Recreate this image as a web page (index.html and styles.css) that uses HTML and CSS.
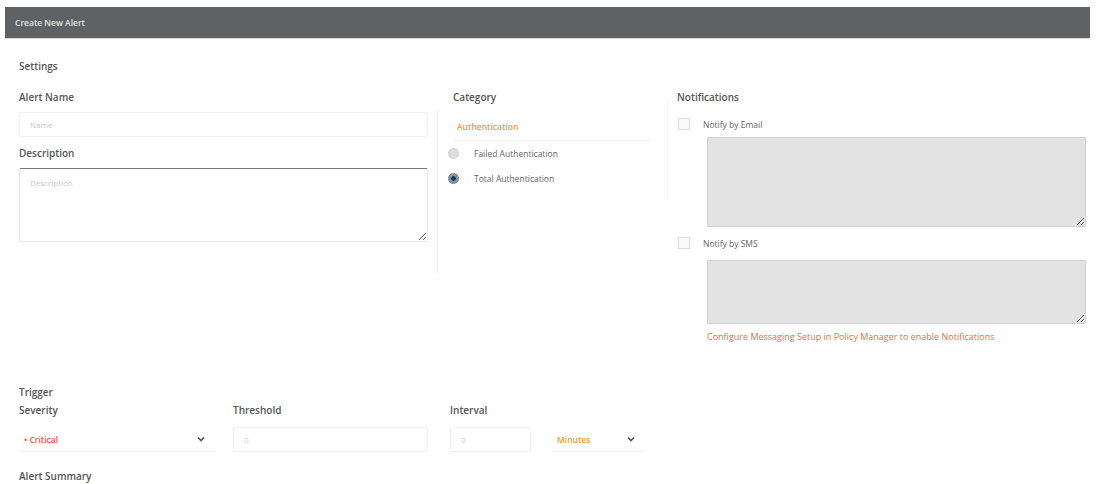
FILE: index.html
```html
<!DOCTYPE html>
<html lang="en">
<head>
  <meta charset="UTF-8" />
  <title>Create New Alert</title>
  <link rel="stylesheet" href="styles.css">
</head>
<body>
  <div class="page">
    <header class="panel-head">Create New Alert</header>

    <main class="panel-body">
      <h2 class="section">Settings</h2>

      <div class="settings">
        <div class="col col-main">
          <label class="label">Alert Name</label>
          <input class="field" type="text" placeholder="Name">
          <label class="label desc-label">Description</label>
          <textarea class="field area" placeholder="Description"></textarea>
        </div>

        <div class="col col-cat">
          <label class="label">Category</label>
          <div class="tab">Authentication</div>
          <div class="radio-row"><span class="radio"></span>Failed Authentication</div>
          <div class="radio-row"><span class="radio checked"></span>Total Authentication</div>
        </div>

        <div class="col col-notif">
          <label class="label">Notifications</label>
          <div class="check-row"><span class="check"></span>Notify by Email</div>
          <textarea class="gray-area email" disabled></textarea>
          <div class="check-row sms"><span class="check"></span>Notify by SMS</div>
          <textarea class="gray-area sms-area" disabled></textarea>
          <p class="note">Configure Messaging Setup in Policy Manager to enable Notifications</p>
        </div>
      </div>

      <h2 class="section trigger">Trigger</h2>

      <div class="trigger-row">
        <div class="tcol">
          <label class="label">Severity</label>
          <div class="select sev">
            <span class="sev-text">&bull; Critical</span>
            <svg width="8" height="6" viewBox="0 0 8 6"><path d="M1 1.5 L4 4.5 L7 1.5" fill="none" stroke="#555" stroke-width="1.6"/></svg>
          </div>
        </div>
        <div class="tcol">
          <label class="label">Threshold</label>
          <input class="field small" type="text" placeholder="0">
        </div>
        <div class="tcol">
          <label class="label">Interval</label>
          <input class="field small" type="text" placeholder="0">
        </div>
        <div class="tcol">
          <label class="label">&nbsp;</label>
          <div class="select mins">
            <span class="min-text">Minutes</span>
            <svg width="8" height="6" viewBox="0 0 8 6"><path d="M1 1.5 L4 4.5 L7 1.5" fill="none" stroke="#555" stroke-width="1.6"/></svg>
          </div>
        </div>
      </div>

      <h2 class="section summary">Alert Summary</h2>
    </main>
  </div>
</body>
</html>
```

FILE: styles.css
```css
body {
  margin: 0;
  background: #fff;
  font-family: "Open Sans", "Liberation Sans", sans-serif;
  color: #444;
}
.page {
  padding: 7px 6px 0 5px;
}
.panel-head {
  background: #5f6264;
  color: #e2e2e2;
  height: 31px;
  line-height: 31px;
  padding-left: 10px;
  font-size: 8.5px;
  font-weight: 600;
  border-bottom: 1px solid #d8d8d8;
}
.panel-body {
  padding: 0 4px 0 14px;
}
.section {
  margin: 0;
  font-size: 10px;
  font-weight: 600;
  line-height: 14px;
  color: #555;
}
.panel-body > .section:first-child {
  margin-top: 20px;
}
.label {
  display: block;
  font-size: 10px;
  font-weight: 600;
  line-height: 14px;
  color: #555;
}
.settings {
  display: grid;
  grid-template-columns: 418px 230px 1fr;
  margin-top: 17px;
}
.col-main {
  padding-right: 9px;
}
/* faint column dividers, shorter than the columns */
.col-cat {
  background: linear-gradient(#f1f1f1, #f1f1f1) 0 20px / 1px 165px no-repeat;
  padding-left: 16px;
  padding-right: 17px;
}
.col-notif {
  background: linear-gradient(#f3f3f3, #f3f3f3) 0 10px / 1px 100px no-repeat;
  padding-left: 10px;
}
.field {
  display: block;
  box-sizing: border-box;
  width: 100%;
  height: 25px;
  margin-top: 8px;
  border: 1px solid #f0f0f0;
  border-radius: 2px;
  padding: 0 10px;
  font-family: inherit;
  font-size: 8px;
  color: #555;
  outline: none;
}
.field::placeholder {
  color: #c8c8c8;
}
.desc-label {
  margin-top: 9px;
}
.area {
  height: 74px;
  padding: 8px 10px;
  border: 1px solid #e6e6e6;
  border-top: 1px solid #777;
  resize: vertical;
}
.tab {
  margin-top: 9px;
  height: 27px;
  line-height: 27px;
  padding-left: 4px;
  border-bottom: 1px solid #f2f2f2;
  color: #f29a3a;
  font-size: 8.5px;
  font-weight: 600;
}
.radio-row {
  display: flex;
  align-items: center;
  height: 25px;
  font-size: 8.5px;
  color: #666;
}
.radio-row:first-of-type {
  margin-top: 2px;
}
.radio {
  width: 11px;
  height: 11px;
  border-radius: 50%;
  background: #ddd;
  border: 1px solid #d0d0d0;
  margin: 0 15px 0 -5px;
  box-sizing: border-box;
}
.radio.checked {
  background: radial-gradient(circle, #1f3346 0 2px, #7e95ab 2.5px 100%);
  border-color: #6a8199;
}
.check-row {
  display: flex;
  align-items: center;
  height: 16px;
  margin-top: 12px;
  font-size: 8.5px;
  color: #666;
}
.check {
  width: 12px;
  height: 12px;
  border: 1px solid #ddd;
  background: #fafafa;
  box-sizing: border-box;
  margin: 0 13px 0 1px;
}
.gray-area {
  display: block;
  box-sizing: border-box;
  width: calc(100% - 30px);
  margin: 5px 0 0 30px;
  background: #e3e3e3;
  border: 1px solid #d2d2d2;
  border-radius: 1px;
  resize: vertical;
}
.email {
  height: 90px;
}
.check-row.sms {
  margin-top: 8px;
}
.sms-area {
  height: 64px;
  margin-top: 9px;
}
.note {
  margin: 6px 0 0 30px;
  font-size: 9px;
  line-height: 14px;
  color: #e2703d;
}
.section.trigger {
  margin-top: 41px;
}
.trigger-row {
  display: grid;
  grid-template-columns: 214px 217px 103px 93px;
  margin-top: 4px;
}
.tcol .field.small {
  margin-top: 10px;
  width: calc(100% - 22px);
}
.tcol .field.small::placeholder {
  color: #d0d0d0;
}
.select {
  display: flex;
  align-items: center;
  justify-content: space-between;
  box-sizing: border-box;
  height: 25px;
  margin-top: 10px;
  padding: 0 10px 0 5px;
  border-bottom: 1px solid #f2f2f2;
  font-size: 8.5px;
  font-weight: 600;
}
.sev {
  width: 196px;
}
.sev-text {
  color: #e4572e;
}
.mins {
  width: 92px;
  padding-left: 4px;
}
.min-text {
  color: #f29a3a;
}
.section.summary {
  margin-top: 17px;
}
```
